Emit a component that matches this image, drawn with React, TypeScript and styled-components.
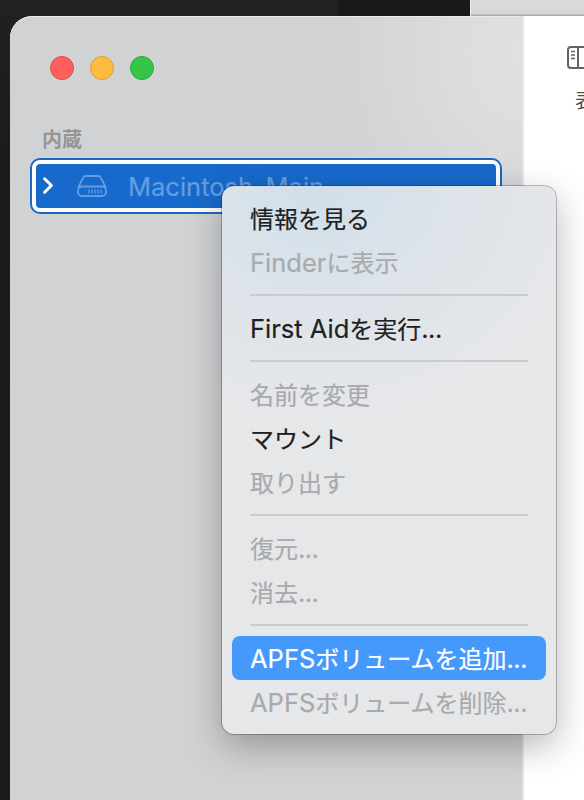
import React from "react";
import styled, { createGlobalStyle } from "styled-components";

const GlobalStyle = createGlobalStyle`
  * { box-sizing: border-box; }
  html, body { margin: 0; padding: 0; overflow: hidden; }
  body { font-family: Inter, "Noto Sans CJK JP", sans-serif; }
`;

const Desktop = styled.div`
  width: 584px;
  height: 800px;
  overflow: hidden;
  padding: 16px 0 0 10px;
  background:
    linear-gradient(90deg, #f0f0f0 0 1px, transparent 1px) 470px 0 / 114px 16px no-repeat,
    linear-gradient(180deg, #dadada, #d6d6d6 14px, #aaa 15px) 470px 0 / 114px 16px no-repeat,
    linear-gradient(90deg, #1f2123 0 338px, #17191b 338px) 0 0 / 470px 16px no-repeat,
    linear-gradient(180deg, #1f2123, #191a1c 200px, #1b1c1e);
`;

const Window = styled.div`
  display: flex;
  width: 574px;
  height: 784px;
  border-top-left-radius: 22px;
  overflow: hidden;
  background: #fff;
`;

const Sidebar = styled.aside`
  width: 514px;
  flex: none;
  border-right: 2px solid #e6e6e7;
  box-shadow: inset 0 1px 0 #ececed;
  border-top-left-radius: 22px;
  background:
    radial-gradient(ellipse 190px 230px at 100% 5%, #e0e0e2 0%, rgba(223, 223, 225, 0.85) 30%, rgba(209, 210, 212, 0) 100%),
    #d1d2d4;
`;

const TrafficLights = styled.div`
  display: flex;
  gap: 16px;
  padding: 40px 0 0 40px;
`;

const Light = styled.span<{ $fill: string; $edge: string }>`
  width: 24px;
  height: 24px;
  border-radius: 50%;
  background: ${(p) => p.$fill};
  border: 1px solid ${(p) => p.$edge};
`;

const SectionTitle = styled.div`
  margin: 45px 0 0 32px;
  height: 30px;
  line-height: 30px;
  font-size: 20px;
  font-weight: 700;
  color: #949596;
`;

const VolumeRow = styled.div`
  display: flex;
  align-items: center;
  width: 472px;
  height: 56px;
  margin: 3px 0 0 20px;
  padding: 4px;
  border: 2px solid #1b68c7;
  border-radius: 10px;
  background: #fff;
`;

const VolumeFill = styled.div`
  display: flex;
  align-items: center;
  width: 460px;
  height: 44px;
  border-radius: 4px;
  background: #176acb;
`;

const Chevron = styled.svg`
  width: 12px;
  height: 20px;
  margin-left: 6px;
`;

const DriveIcon = styled.svg`
  width: 32px;
  height: 24px;
  margin: -2px 0 0 22px;
`;

const VolumeName = styled.span`
  margin-left: 20px;
  font-size: 25.5px;
  color: #659de0;
  white-space: nowrap;
  -webkit-text-stroke: 0.2px currentColor;
`;

const Toolbar = styled.main`
  flex: 1;
  min-width: 0;
  padding: 28px 0 0 42px;
  color: #4c4c4c;
`;

const SidebarIcon = styled.svg`
  display: block;
  width: 34px;
  height: 26px;
`;

const ToolbarLabel = styled.div`
  margin: 16px 0 0 9px;
  font-size: 20px;
  line-height: 30px;
  white-space: nowrap;
`;

const Menu = styled.ul`
  position: absolute;
  left: 222px;
  top: 186px;
  width: 334px;
  height: 548px;
  margin: 0;
  padding: 10px;
  list-style: none;
  border-radius: 12px;
  background:
    radial-gradient(ellipse 270px 230px at 28% 0, rgba(207, 223, 234, 0.95), rgba(216, 225, 234, 0.65) 50%, rgba(230, 231, 233, 0) 100%),
    #e6e7e9;
  box-shadow: 0 0 0 1px rgba(0, 0, 0, 0.24), 0 12px 36px rgba(0, 0, 0, 0.29);
`;

const MenuItem = styled.li<{ $state: "normal" | "disabled" | "active" }>`
  height: 44px;
  padding: 2px 18px 0;
  line-height: 44px;
  font-size: 24px;
  white-space: nowrap;
  border-radius: 8px;
  -webkit-text-stroke: 0.2px currentColor;
  color: ${(p) => (p.$state === "normal" ? "#1e2022" : p.$state === "active" ? "#fff" : "#a8aaad")};
  background: ${(p) => (p.$state === "active" ? "#4499fb" : "transparent")};
`;

const Latin = styled.span`
  font-size: 25.5px;
  line-height: 1;
`;

const Dots = styled(Latin)`
  letter-spacing: -0.55px;
`;

const Separator = styled.li`
  height: 2px;
  margin: 10px 18px;
  background: #cacbcd;
`;

export default function App() {
  return (
    <>
      <GlobalStyle />
      <Desktop>
        <Window>
          <Sidebar>
            <TrafficLights>
              <Light $fill="#fd605c" $edge="#dc4b49" />
              <Light $fill="#fdbb40" $edge="#d99e36" />
              <Light $fill="#35c649" $edge="#2ca73c" />
            </TrafficLights>
            <SectionTitle>内蔵</SectionTitle>
            <VolumeRow>
              <VolumeFill>
                <Chevron viewBox="0 0 12 20" fill="none" stroke="#fff" strokeWidth="3" strokeLinecap="round" strokeLinejoin="round">
                  <path d="M2.6 2.8 9.4 9.5l-6.8 6.7" />
                </Chevron>
                <DriveIcon viewBox="0 0 32 24" fill="none" stroke="#659de0" strokeWidth="1.8" strokeLinejoin="round">
                  <path d="M2.3 14.5 7.1 4.8Q8 3 10 3h12q2 0 2.9 1.8l4.8 9.7" />
                  <rect x="2" y="13.5" width="28" height="9.5" rx="4" />
                  <path d="M13 16.5v4M16 16.5v4M19 16.5v4M22 16.5v4M25 16.5v4" strokeWidth="1.3" />
                </DriveIcon>
                <VolumeName>Macintosh_Main</VolumeName>
              </VolumeFill>
            </VolumeRow>
          </Sidebar>
          <Toolbar>
            <SidebarIcon viewBox="0 0 34 26" fill="none" stroke="#636363" strokeWidth="2">
              <rect x="2" y="3" width="30" height="21" rx="3" />
              <path d="M12 3v21" />
              <path d="M5 7.5h4M5 11h4M5 14.5h4" strokeWidth="1.4" />
            </SidebarIcon>
            <ToolbarLabel>表示</ToolbarLabel>
          </Toolbar>
        </Window>
        <Menu>
          <MenuItem $state="normal">情報を見る</MenuItem>
          <MenuItem $state="disabled"><Latin>Finder</Latin>に表示</MenuItem>
          <Separator />
          <MenuItem $state="normal"><Latin>First Aid</Latin>を実行<Dots>...</Dots></MenuItem>
          <Separator />
          <MenuItem $state="disabled">名前を変更</MenuItem>
          <MenuItem $state="normal">マウント</MenuItem>
          <MenuItem $state="disabled">取り出す</MenuItem>
          <Separator />
          <MenuItem $state="disabled">復元<Dots>...</Dots></MenuItem>
          <MenuItem $state="disabled">消去<Dots>...</Dots></MenuItem>
          <Separator />
          <MenuItem $state="active"><Latin>APFS</Latin>ボリュームを追加<Dots>...</Dots></MenuItem>
          <MenuItem $state="disabled"><Latin>APFS</Latin>ボリュームを削除<Dots>...</Dots></MenuItem>
        </Menu>
      </Desktop>
    </>
  );
}
